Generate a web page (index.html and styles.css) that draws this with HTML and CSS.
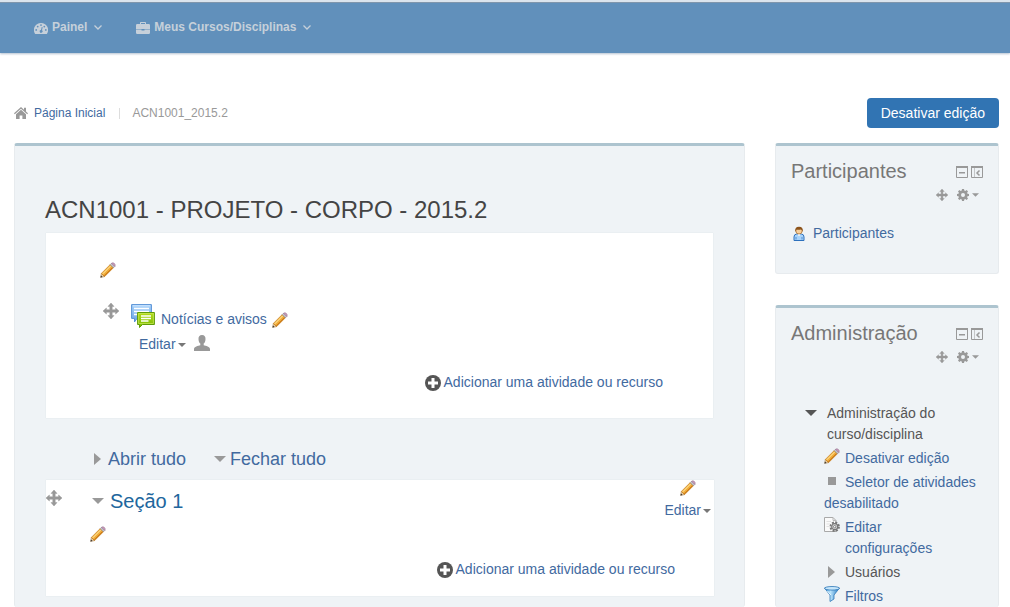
FILE: index.html
```
<!DOCTYPE html>
<html lang="pt-BR">
<head>
<meta charset="utf-8">
<meta name="viewport" content="width=device-width, initial-scale=1">
<title>ACN1001 - PROJETO - CORPO - 2015.2</title>
<link rel="stylesheet" href="styles.css">
</head>
<body>
<svg class="sprite" aria-hidden="true">
  <defs>
    <linearGradient id="g-pencil" x1="0" y1="0" x2="1" y2="1"><stop offset="0" stop-color="#fbd66b"/><stop offset="1" stop-color="#e8850c"/></linearGradient>
    <linearGradient id="g-green" x1="0" y1="0" x2="0" y2="1"><stop offset="0" stop-color="#b5dc1c"/><stop offset="1" stop-color="#76b900"/></linearGradient>
    <linearGradient id="g-blue" x1="0" y1="0" x2="0" y2="1"><stop offset="0" stop-color="#a9d2fa"/><stop offset="1" stop-color="#6ea6e8"/></linearGradient>
    <linearGradient id="g-funnel" x1="0" y1="0" x2="1" y2="0"><stop offset="0" stop-color="#2d8bd6"/><stop offset=".4" stop-color="#b9e3fb"/><stop offset="1" stop-color="#1f76c2"/></linearGradient>
  </defs>
  <symbol id="pencil" viewBox="0 0 16 16">
    <path d="M.6 15.4 1.4 11.4 4.6 14.6Z" fill="#efd2a3" stroke="#9b7a50" stroke-width=".6"/>
    <path d="M.5 15.5 1 13.5 2.5 15Z" fill="#333"/>
    <path d="M1.4 11.4 10.2 2.6 13.4 5.8 4.6 14.6Z" fill="url(#g-pencil)" stroke="#c47a1c" stroke-width=".7"/>
    <path d="M2.8 11.8 10.8 3.8" stroke="#ffe9a0" stroke-width="1"/>
    <path d="M4.4 13.8 12.7 5.5" stroke="#b9660b" stroke-width=".8"/>
    <path d="M10.2 2.6 11.6 1.2 14.8 4.4 13.4 5.8Z" fill="#c4c4cc" stroke="#85858c" stroke-width=".6"/>
    <path d="M11.6 1.2Q13 .1 14.4 1.5 15.9 3 14.8 4.4Z" fill="#cf9fc0" stroke="#96718d" stroke-width=".6"/>
  </symbol>
  <symbol id="move" viewBox="0 0 16 16">
    <path d="M8 0 11 3.4H9.2V6.8H12.6V5L16 8 12.6 11V9.2H9.2V12.6H11L8 16 5 12.6H6.8V9.2H3.4V11L0 8 3.4 5V6.8H6.8V3.4H5Z" stroke="currentColor" stroke-width=".5"/>
  </symbol>
  <symbol id="down" viewBox="0 0 12 6"><path d="M0 0H12L6 6Z"/></symbol>
  <symbol id="right" viewBox="0 0 7 12"><path d="M0 0 7 6 0 12Z"/></symbol>
  <symbol id="chevron" viewBox="0 0 8 5"><path d="M.5.5 4 4 7.5.5" fill="none" stroke="currentColor" stroke-width="1.3"/></symbol>
  <symbol id="plus" viewBox="0 0 16 16">
    <circle cx="8" cy="8" r="8"/>
    <path d="M6.5 3h3v3.5H13v3H9.500V13h-3V9.500H3v-3H6.500Z" fill="#fff"/>
  </symbol>
  <symbol id="gear" viewBox="0 0 12 12">
    <path fill-rule="evenodd" d="M5 0h2l.3 1.600 1 .4L9.700 1.100l1.300 1.300-.9 1.400.4 1L12 5v2l-1.500.3-.4 1 .9 1.300-1.400 1.400-1.300-.9-1 .4L7 12H5l-.3-1.500-1-.4-1.300.9L1 9.600l.9-1.300-.4-1L0 7V5l1.500-.3.4-1L1 2.400 2.400 1.100l1.300.9 1-.4ZM6 4a2 2 0 1 0 0 4 2 2 0 0 0 0-4Z"/>
  </symbol>
  <symbol id="collapse" viewBox="0 0 12 12">
    <path d="M.5 1.500h11v10H.5Z" fill="none" stroke="currentColor"/><path d="M0 0h12v2H0ZM3 6h6v1.500H3Z"/>
  </symbol>
  <symbol id="dock" viewBox="0 0 12 12">
    <path d="M.5 1.500h11v10H.5Z" fill="none" stroke="currentColor"/><path d="M0 0h12v2H0Z"/><path d="M3.500 2v9.500" stroke="currentColor" stroke-width=".5"/><path d="M8.500 4.500 6 7l2.500 2.500" fill="none" stroke="currentColor" stroke-width="1.500"/>
  </symbol>
  <symbol id="home" viewBox="0 0 14 12">
    <path d="M7 0 10 2.700V.8h2v3.700L14 6.300l-.8.9L7 1.700.8 7.200 0 6.300Z"/><path d="M7 2.700 12 7.200V12H8.400V8.500H5.600V12H2V7.200Z"/>
  </symbol>
  <symbol id="dashboard" viewBox="0 0 14 12">
    <path fill-rule="evenodd" d="M7 1a7 7 0 0 1 6 10.700q-.2.300-.5.300h-11q-.3 0-.5-.3A7 7 0 0 1 7 1ZM2.200 7a.9.900 0 1 0 0 1.800.9.900 0 0 0 0-1.800ZM3.700 3.700a.9.900 0 1 0 0 1.800.9.900 0 0 0 0-1.800ZM7 2.200A.9.900 0 1 0 7 4a.9.900 0 0 0 0-1.800ZM10.300 3.700a.9.900 0 1 0 0 1.800.9.900 0 0 0 0-1.800ZM11.800 7a.9.900 0 1 0 0 1.800.9.900 0 0 0 0-1.800ZM7.700 5 7 8a1.400 1.400 0 1 0 1 .3L8.700 5.300Z"/>
  </symbol>
  <symbol id="briefcase" viewBox="0 0 14 12">
    <path fill-rule="evenodd" d="M4 2V.8Q4 0 4.800 0h4.400Q10 0 10 .8V2h2.800Q14 2 14 3.200V7H0V3.200Q0 2 1.200 2ZM5 1v1h4V1Z"/><path d="M0 7.500h5.500V8.500h3V7.500H14v3.300Q14 12 12.800 12H1.200Q0 12 0 10.800Z"/>
  </symbol>
  <symbol id="forum" viewBox="0 0 24 24">
    <path d="M.6.6H20.400V14.400H6L3.500 18V14.400H.6Z" fill="url(#g-blue)" stroke="#5791d6"/>
    <path d="M1.800 1.800H19.200" stroke="#d3e9ff"/><path d="M3 4.500H18M3 7.500H18M3 10.500H8" stroke="#fff" stroke-width="1.300"/>
    <path d="M6.600 8.500H23.400V20.500H11.500L8.500 23.500V20.500H6.600Z" fill="url(#g-green)" stroke="#5f9b08"/>
    <path d="M7.600 9.500H22.400V19.500H7.600Z" fill="none" stroke="#cbe85e" stroke-width=".7"/>
    <path d="M10 12H20M10 14.500H20M10 17H17.500" stroke="#fff" stroke-width="1.300"/>
  </symbol>
  <symbol id="person" viewBox="0 0 16 16">
    <path d="M8 0c2.500 0 3.700 1.700 3.500 4.200-.1 2.200-.8 3.600-1.800 4.400V10.300c2.200.5 6.300 1.500 6.300 3.700v2H0v-2c0-2.200 4.100-3.200 6.300-3.700V8.600C5.300 7.800 4.600 6.400 4.500 4.200 4.300 1.700 5.500 0 8 0Z"/>
  </symbol>
  <symbol id="user" viewBox="0 0 12 16">
    <path d="M1 14.500V11Q1 8.300 3.500 8h5Q11 8.300 11 11v3.500Z" fill="#a8d3fa" stroke="#2c70bd"/>
    <path d="M3 13.500V11M9 13.500V11" stroke="#3d82cc" stroke-width=".8"/>
    <path d="M4.500 8 6 10.500 7.500 8Z" fill="#fff"/>
    <circle cx="6" cy="4.800" r="3.200" fill="#f8cf9c" stroke="#a36a27" stroke-width=".7"/>
    <path d="M2.300 6Q1.500.8 6 .8T9.700 6Q9 4 8 3.600 5 4 3.500 3.500 3 4.500 2.300 6Z" fill="#8c531b"/>
  </symbol>
  <symbol id="settings" viewBox="0 0 16 16">
    <path d="M.5.5H9L12 3.500V14.500H.5Z" fill="#fafafa" stroke="#a9a9a9"/><path d="M9 .5V3.500H12" fill="none" stroke="#b9b9b9"/>
    <path d="M2.500 4.500H7M2.500 7H6M2.500 9.500H5" stroke="#e1e1e1"/>
    <circle cx="10.700" cy="9.700" r="4.200" fill="none" stroke="#777" stroke-width="2" stroke-dasharray="2 1.300"/>
    <circle cx="10.700" cy="9.700" r="3" fill="#ddd" stroke="#777" stroke-width="1.200"/><circle cx="10.700" cy="9.700" r="1.200" fill="#fff" stroke="#666" stroke-width=".8"/>
  </symbol>
  <symbol id="funnel" viewBox="0 0 16 16">
    <path d="M.5 2 6 9V15.500L10 13V9L15.500 2Z" fill="url(#g-funnel)" stroke="#2d77b8" stroke-width=".8"/>
    <ellipse cx="8" cy="2.300" rx="7.500" ry="1.800" fill="#c7e6fa" stroke="#2d77b8" stroke-width=".8"/>
    <path d="M3.500 5 6.800 9" stroke="#eaf8ff"/>
  </symbol>
</svg>

<header class="navbar">
  <nav class="menu" aria-label="Principal">
    <a class="menu-link" href="#painel"><svg class="i-glyph"><use href="#dashboard"/></svg>Painel<svg class="i-chevron"><use href="#chevron"/></svg></a>
    <a class="menu-link" href="#cursos"><svg class="i-glyph"><use href="#briefcase"/></svg>Meus Cursos/Disciplinas<svg class="i-chevron"><use href="#chevron"/></svg></a>
  </nav>
</header>

<div class="page">
  <div class="page-head">
    <nav class="crumbs" aria-label="Trilha">
      <svg class="i-glyph"><use href="#home"/></svg>
      <a href="#inicio">Página Inicial</a>
      <span class="crumb-rule"></span>
      <span>ACN1001_2015.2</span>
    </nav>
    <button class="btn-primary" type="button">Desativar edição</button>
  </div>

  <div class="columns">
    <main class="panel course">
      <h1 class="course-title">ACN1001 - PROJETO - CORPO - 2015.2</h1>

      <section class="card intro">
        <a class="icon-link intro-edit" href="#editar-resumo" aria-label="Editar sumário"><svg class="i-16"><use href="#pencil"/></svg></a>
        <div class="activity">
          <button class="icon-btn" type="button" aria-label="Mover"><svg class="i-16"><use href="#move"/></svg></button>
          <div class="activity-body">
            <div class="activity-name">
              <svg class="i-24"><use href="#forum"/></svg>
              <a href="#noticias">Notícias e avisos</a>
              <a class="icon-link" href="#titulo" aria-label="Editar título"><svg class="i-16"><use href="#pencil"/></svg></a>
            </div>
            <div class="activity-tools">
              <button class="edit-menu" type="button">Editar<svg class="i-caret"><use href="#down"/></svg></button>
              <button class="icon-btn" type="button" aria-label="Atribuir papéis"><svg class="i-16"><use href="#person"/></svg></button>
            </div>
          </div>
        </div>
        <div class="add-row"><a class="add" href="#adicionar"><svg class="i-16"><use href="#plus"/></svg>Adicionar uma atividade ou recurso</a></div>
      </section>

      <div class="toggles">
        <a class="toggle" href="#abrir"><svg class="i-right"><use href="#right"/></svg>Abrir tudo</a>
        <a class="toggle toggle-close" href="#fechar"><svg class="i-down"><use href="#down"/></svg>Fechar tudo</a>
      </div>

      <section class="card topic">
        <button class="icon-btn topic-move" type="button" aria-label="Mover seção"><svg class="i-16"><use href="#move"/></svg></button>
        <div class="topic-body">
          <h2 class="topic-title"><a href="#secao-1"><svg class="i-down"><use href="#down"/></svg>Seção 1</a></h2>
          <a class="icon-link" href="#editar-secao" aria-label="Editar sumário"><svg class="i-16"><use href="#pencil"/></svg></a>
        </div>
        <div class="topic-side">
          <a class="icon-link" href="#nome-secao" aria-label="Editar seção"><svg class="i-16"><use href="#pencil"/></svg></a>
          <button class="edit-menu" type="button">Editar<svg class="i-caret"><use href="#down"/></svg></button>
        </div>
        <div class="add-row topic-add"><a class="add" href="#adicionar-1"><svg class="i-16"><use href="#plus"/></svg>Adicionar uma atividade ou recurso</a></div>
      </section>
    </main>

    <aside class="side">
      <section class="panel block">
        <div class="block-head">
          <h2 class="block-title">Participantes</h2>
          <div class="block-tools">
            <button class="icon-btn" type="button" aria-label="Ocultar"><svg class="i-12"><use href="#collapse"/></svg></button>
            <button class="icon-btn" type="button" aria-label="Acoplar"><svg class="i-12"><use href="#dock"/></svg></button>
          </div>
        </div>
        <div class="block-actions">
          <button class="icon-btn" type="button" aria-label="Mover bloco"><svg class="i-12"><use href="#move"/></svg></button>
          <button class="icon-btn gear-menu" type="button" aria-label="Ações"><svg class="i-12"><use href="#gear"/></svg><svg class="i-caret"><use href="#down"/></svg></button>
        </div>
        <a class="people" href="#participantes"><svg class="i-user"><use href="#user"/></svg>Participantes</a>
      </section>

      <section class="panel block block-admin">
        <div class="block-head">
          <h2 class="block-title">Administração</h2>
          <div class="block-tools">
            <button class="icon-btn" type="button" aria-label="Ocultar"><svg class="i-12"><use href="#collapse"/></svg></button>
            <button class="icon-btn" type="button" aria-label="Acoplar"><svg class="i-12"><use href="#dock"/></svg></button>
          </div>
        </div>
        <div class="block-actions">
          <button class="icon-btn" type="button" aria-label="Mover bloco"><svg class="i-12"><use href="#move"/></svg></button>
          <button class="icon-btn gear-menu" type="button" aria-label="Ações"><svg class="i-12"><use href="#gear"/></svg><svg class="i-caret"><use href="#down"/></svg></button>
        </div>
        <div class="tree">
          <div class="tree-root"><svg class="i-down"><use href="#down"/></svg><span>Administração do curso/disciplina</span></div>
          <ul class="tree-list">
            <li class="tree-item"><svg class="i-16"><use href="#pencil"/></svg><a href="#desativar">Desativar edição</a></li>
            <li><a href="#seletor"><span class="square"></span>Seletor de atividades desabilitado</a></li>
            <li class="tree-item"><svg class="i-16"><use href="#settings"/></svg><a href="#config">Editar<br>configurações</a></li>
            <li class="tree-item tree-branch"><svg class="i-right"><use href="#right"/></svg><span>Usuários</span></li>
            <li class="tree-item"><svg class="i-16"><use href="#funnel"/></svg><a href="#filtros">Filtros</a></li>
          </ul>
        </div>
      </section>
    </aside>
  </div>
</div>
</body>
</html>
```
FILE: styles.css
```
* { box-sizing: border-box; }

body {
  margin: 0;
  min-height: 100vh;
  display: flex;
  flex-direction: column;
  background: #fff;
  color: #555;
  font: 14px/21px "Liberation Sans", Arial, sans-serif;
}

a { color: #426a9f; text-decoration: none; }
a:hover { text-decoration: underline; }
h1, h2 { margin: 0; font-weight: normal; }
svg { display: block; flex: none; fill: currentColor; }
button { font: inherit; cursor: pointer; }

.sprite { position: absolute; width: 0; height: 0; }
.i-24 { width: 24px; height: 24px; }
.i-16 { width: 16px; height: 16px; }
.i-12 { width: 12px; height: 12px; }
.i-glyph { width: 14px; height: 12px; }
.i-chevron { width: 8px; height: 5px; }
.i-user { width: 12px; height: 16px; }
.i-down { width: 12px; height: 6px; color: #999; }
.i-right { width: 7px; height: 12px; color: #999; }
.i-caret { width: 8px; height: 4px; color: #777; }

.icon-btn, .edit-menu {
  display: flex;
  align-items: center;
  padding: 0;
  border: 0;
  background: none;
  color: #999;
}
.icon-link { display: block; }
.edit-menu { gap: 2px; color: #426a9f; }

/* Top bar */
.navbar {
  height: 53px;
  padding: 0 34px;
  border-top: 2px solid #dbe4ed;
  background: #6190bb;
  box-shadow: inset 0 1px #8096ac, 0 1px 2px #b5c2d0;
}
.menu { display: flex; gap: 34px; height: 51px; }
.menu-link {
  display: flex;
  align-items: center;
  gap: 4px;
  color: #c6d0da;
  font-size: 12px;
  font-weight: bold;
}
.menu-link .i-chevron { margin-left: 3px; }

/* Page */
.page {
  flex: 1;
  display: flex;
  flex-direction: column;
  padding: 45px 11px 0 14px;
}
.page-head {
  display: flex;
  align-items: center;
  justify-content: space-between;
  margin-bottom: 15px;
}
.crumbs { display: flex; align-items: center; gap: 6px; color: #999; font-size: 12px; }
.crumb-rule { width: 1px; height: 11px; margin: 0 6px 0 8px; background: #ddd; }
.btn-primary {
  height: 30px;
  padding: 0 14px;
  border: 0;
  border-radius: 4px;
  background: #3174b3;
  color: #fff;
}

.columns {
  flex: 1;
  display: grid;
  grid-template-columns: minmax(0, 1fr) 224px;
  gap: 30px;
}
.panel {
  border: 1px solid #e7ebee;
  border-top: 3px solid #adc4cf;
  border-radius: 3px;
  background: #eff3f6;
}

/* Course */
.course { padding: 48px 30px 10px; border-bottom: 0; }
.course-title { margin-bottom: 7px; color: #444; font-size: 24px; line-height: 32px; }
.card { margin-left: 1px; background: #fff; box-shadow: 0 0 1px #d5dade; }

.intro { margin-right: 1px; padding: 29px 0 25px 54px; }
.intro-edit { width: 16px; }
.activity { display: flex; align-items: flex-start; gap: 12px; margin-top: 25px; padding-left: 3px; }
.activity-name { display: flex; align-items: flex-end; height: 25px; gap: 6px; }
.activity-name .icon-link { margin-left: -1px; }
.activity-name a { line-height: 18px; }
.activity-tools { display: flex; align-items: center; gap: 8px; margin: 6px 0 0 8px; }
.activity-tools .icon-btn { padding-bottom: 4px; }

.add-row { display: flex; justify-content: flex-end; margin-top: 17px; padding-right: 50px; }
.add { display: flex; align-items: center; gap: 3px; }
.add svg { color: #555; }

.toggles { display: flex; gap: 28px; margin: 30px 0 10px; padding-left: 49px; font-size: 18px; line-height: 22px; }
.toggle { display: flex; align-items: center; gap: 7px; }
.toggle-close { gap: 4px; }

.topic { display: grid; grid-template-columns: 44px 1fr auto; padding-bottom: 16px; }
.topic-move { align-self: start; margin-top: 10px; }
.topic-title { margin: 8px 0 12px; padding-left: 2px; font-size: 20px; line-height: 26px; }
.topic-title a { display: flex; align-items: center; gap: 6px; color: #21669d; }
.topic-body > .icon-link { width: 16px; }
.topic-side { display: flex; flex-direction: column; align-items: center; gap: 4px; padding-right: 3px; }
.topic-add { grid-column: 1 / -1; padding-right: 39px; }

/* Side blocks */
.side { display: flex; flex-direction: column; gap: 31px; }
.block { padding: 13px 15px 29px; }
.block-admin { flex: 1; padding-bottom: 0; border-bottom: 0; }
.block-head { display: flex; align-items: center; justify-content: space-between; }
.block-title { color: #777; font-size: 20px; line-height: 24px; }
.block-tools { display: flex; gap: 3px; padding-top: 2px; }
.block-actions { display: flex; justify-content: flex-end; gap: 9px; height: 16px; margin: 4px 4px 0 0; }
.gear-menu { gap: 3px; }
.gear-menu .i-caret { width: 7px; color: #999; }
.people { display: flex; align-items: center; gap: 8px; margin-top: 20px; padding-left: 2px; }

.tree { margin-top: 38px; padding-left: 14px; }
.tree-root { display: flex; gap: 10px; }
.tree-root svg { margin-top: 7px; color: #555; }
.tree-list { display: flex; flex-direction: column; gap: 3px; margin: 3px 0 0; padding: 0 0 0 19px; list-style: none; }
.tree-item { display: flex; gap: 5px; }
.tree-branch { gap: 10px; padding-left: 4px; }
.tree-branch svg { margin-top: 4px; }
.square { display: inline-block; width: 8px; height: 8px; margin: 0 9px 2px 4px; background: #999; }
```
